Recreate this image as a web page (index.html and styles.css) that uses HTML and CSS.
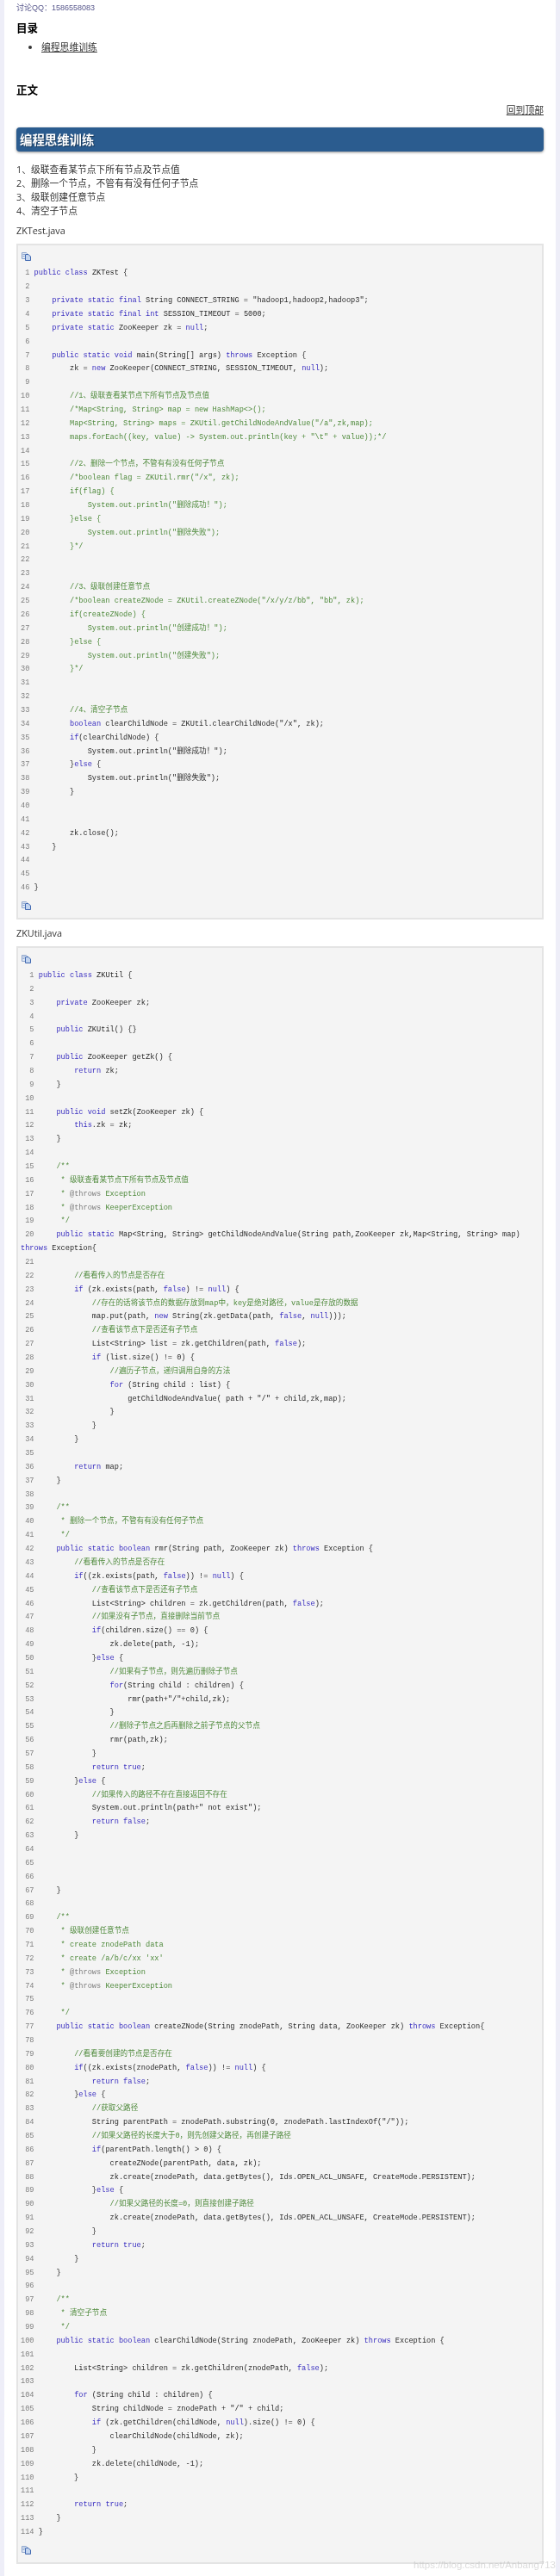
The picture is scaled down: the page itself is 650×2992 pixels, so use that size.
FILE: index.html
```html
<!DOCTYPE html>
<html lang="zh-CN">
<head>
<meta charset="utf-8">
<title>编程思维训练</title>
<link rel="stylesheet" href="styles.css">
</head>
<body>
<main class="page">
<p class="contact">讨论QQ：1586558083</p>
<h3 class="toc-title">目录</h3>
<ul class="toc">
<li><a href="#t">编程思维训练</a></li>
</ul>
<h3 class="body-title">正文</h3>
<p class="back"><a href="#top">回到顶部</a></p>
<h2 class="bar" id="t">编程思维训练</h2>
<p class="goals">1、级联查看某节点下所有节点及节点值<br>2、删除一个节点，不管有有没有任何子节点<br>3、级联创建任意节点<br>4、清空子节点</p>
<p class="file">ZKTest.java</p>
<div class="code">
<svg class="copy" viewBox="0 0 11 10"><path class="pg1" d="M.5.5h5l1 1v6h-6z"/><path class="pg2" d="M4.5 2.5h3.5l2.5 2.5v4.5h-6z"/><path class="pg3" d="M1.500 2.500h3M1.500 4.500h2"/></svg>
<pre class="src"><span class="n"> 1</span> <span class="k">public</span> <span class="k">class</span> ZKTest {
<span class="n"> 2</span> 
<span class="n"> 3</span>     <span class="k">private</span> <span class="k">static</span> <span class="k">final</span> String CONNECT_STRING = "hadoop1,hadoop2,hadoop3";
<span class="n"> 4</span>     <span class="k">private</span> <span class="k">static</span> <span class="k">final</span> <span class="k">int</span> SESSION_TIMEOUT = 5000;
<span class="n"> 5</span>     <span class="k">private</span> <span class="k">static</span> ZooKeeper zk = <span class="k">null</span>;
<span class="n"> 6</span> 
<span class="n"> 7</span>     <span class="k">public</span> <span class="k">static</span> <span class="k">void</span> main(String[] args) <span class="k">throws</span> Exception {
<span class="n"> 8</span>         zk = <span class="k">new</span> ZooKeeper(CONNECT_STRING, SESSION_TIMEOUT, <span class="k">null</span>);
<span class="n"> 9</span> 
<span class="n">10</span>         <span class="c">//1、级联查看某节点下所有节点及节点值</span>
<span class="n">11</span>         <span class="c">/*Map&lt;String, String&gt; map = new HashMap&lt;&gt;();</span>
<span class="n">12</span> <span class="c">        Map&lt;String, String&gt; maps = ZKUtil.getChildNodeAndValue("/a",zk,map);</span>
<span class="n">13</span> <span class="c">        maps.forEach((key, value) -&gt; System.out.println(key + "\t" + value));*/</span>
<span class="n">14</span> 
<span class="n">15</span>         <span class="c">//2、删除一个节点，不管有有没有任何子节点</span>
<span class="n">16</span>         <span class="c">/*boolean flag = ZKUtil.rmr("/x", zk);</span>
<span class="n">17</span> <span class="c">        if(flag) {</span>
<span class="n">18</span> <span class="c">            System.out.println("删除成功！");</span>
<span class="n">19</span> <span class="c">        }else {</span>
<span class="n">20</span> <span class="c">            System.out.println("删除失败");</span>
<span class="n">21</span> <span class="c">        }*/</span>
<span class="n">22</span> 
<span class="n">23</span> 
<span class="n">24</span>         <span class="c">//3、级联创建任意节点</span>
<span class="n">25</span>         <span class="c">/*boolean createZNode = ZKUtil.createZNode("/x/y/z/bb", "bb", zk);</span>
<span class="n">26</span> <span class="c">        if(createZNode) {</span>
<span class="n">27</span> <span class="c">            System.out.println("创建成功！");</span>
<span class="n">28</span> <span class="c">        }else {</span>
<span class="n">29</span> <span class="c">            System.out.println("创建失败");</span>
<span class="n">30</span> <span class="c">        }*/</span>
<span class="n">31</span> 
<span class="n">32</span> 
<span class="n">33</span>         <span class="c">//4、清空子节点</span>
<span class="n">34</span>         <span class="k">boolean</span> clearChildNode = ZKUtil.clearChildNode("/x", zk);
<span class="n">35</span>         <span class="k">if</span>(clearChildNode) {
<span class="n">36</span>             System.out.println("删除成功！");
<span class="n">37</span>         }<span class="k">else</span> {
<span class="n">38</span>             System.out.println("删除失败");
<span class="n">39</span>         }
<span class="n">40</span> 
<span class="n">41</span> 
<span class="n">42</span>         zk.close();
<span class="n">43</span>     }
<span class="n">44</span> 
<span class="n">45</span> 
<span class="n">46</span> }</pre>
<svg class="copy end" viewBox="0 0 11 10"><path class="pg1" d="M.5.5h5l1 1v6h-6z"/><path class="pg2" d="M4.5 2.5h3.5l2.5 2.5v4.5h-6z"/><path class="pg3" d="M1.500 2.500h3M1.500 4.500h2"/></svg>
</div>
<p class="file">ZKUtil.java</p>
<div class="code">
<svg class="copy" viewBox="0 0 11 10"><path class="pg1" d="M.5.5h5l1 1v6h-6z"/><path class="pg2" d="M4.5 2.5h3.5l2.5 2.5v4.5h-6z"/><path class="pg3" d="M1.500 2.500h3M1.500 4.500h2"/></svg>
<pre class="src"><span class="n">  1</span> <span class="k">public</span> <span class="k">class</span> ZKUtil {
<span class="n">  2</span> 
<span class="n">  3</span>     <span class="k">private</span> ZooKeeper zk;
<span class="n">  4</span> 
<span class="n">  5</span>     <span class="k">public</span> ZKUtil() {}
<span class="n">  6</span> 
<span class="n">  7</span>     <span class="k">public</span> ZooKeeper getZk() {
<span class="n">  8</span>         <span class="k">return</span> zk;
<span class="n">  9</span>     }
<span class="n"> 10</span> 
<span class="n"> 11</span>     <span class="k">public</span> <span class="k">void</span> setZk(ZooKeeper zk) {
<span class="n"> 12</span>         <span class="k">this</span>.zk = zk;
<span class="n"> 13</span>     }
<span class="n"> 14</span> 
<span class="n"> 15</span>     <span class="c">/**</span>
<span class="n"> 16</span> <span class="c">     * 级联查看某节点下所有节点及节点值</span>
<span class="n"> 17</span> <span class="c">     * <span class="t">@throws</span> Exception</span>
<span class="n"> 18</span> <span class="c">     * <span class="t">@throws</span> KeeperException</span>
<span class="n"> 19</span> <span class="c">     */</span>
<span class="n"> 20</span>     <span class="k">public</span> <span class="k">static</span> Map&lt;String, String&gt; getChildNodeAndValue(String path,ZooKeeper zk,Map&lt;String, String&gt; map) <span class="k">throws</span> Exception{
<span class="n"> 21</span> 
<span class="n"> 22</span>         <span class="c">//看看传入的节点是否存在</span>
<span class="n"> 23</span>         <span class="k">if</span> (zk.exists(path, <span class="k">false</span>) != <span class="k">null</span>) {
<span class="n"> 24</span>             <span class="c">//存在的话将该节点的数据存放到map中，key是绝对路径，value是存放的数据</span>
<span class="n"> 25</span>             map.put(path, <span class="k">new</span> String(zk.getData(path, <span class="k">false</span>, <span class="k">null</span>)));
<span class="n"> 26</span>             <span class="c">//查看该节点下是否还有子节点</span>
<span class="n"> 27</span>             List&lt;String&gt; list = zk.getChildren(path, <span class="k">false</span>);
<span class="n"> 28</span>             <span class="k">if</span> (list.size() != 0) {
<span class="n"> 29</span>                 <span class="c">//遍历子节点，递归调用自身的方法</span>
<span class="n"> 30</span>                 <span class="k">for</span> (String child : list) {
<span class="n"> 31</span>                     getChildNodeAndValue( path + "/" + child,zk,map);
<span class="n"> 32</span>                 }
<span class="n"> 33</span>             }
<span class="n"> 34</span>         }
<span class="n"> 35</span> 
<span class="n"> 36</span>         <span class="k">return</span> map;
<span class="n"> 37</span>     }
<span class="n"> 38</span> 
<span class="n"> 39</span>     <span class="c">/**</span>
<span class="n"> 40</span> <span class="c">     * 删除一个节点，不管有有没有任何子节点</span>
<span class="n"> 41</span> <span class="c">     */</span>
<span class="n"> 42</span>     <span class="k">public</span> <span class="k">static</span> <span class="k">boolean</span> rmr(String path, ZooKeeper zk) <span class="k">throws</span> Exception {
<span class="n"> 43</span>         <span class="c">//看看传入的节点是否存在</span>
<span class="n"> 44</span>         <span class="k">if</span>((zk.exists(path, <span class="k">false</span>)) != <span class="k">null</span>) {
<span class="n"> 45</span>             <span class="c">//查看该节点下是否还有子节点</span>
<span class="n"> 46</span>             List&lt;String&gt; children = zk.getChildren(path, <span class="k">false</span>);
<span class="n"> 47</span>             <span class="c">//如果没有子节点，直接删除当前节点</span>
<span class="n"> 48</span>             <span class="k">if</span>(children.size() == 0) {
<span class="n"> 49</span>                 zk.delete(path, -1);
<span class="n"> 50</span>             }<span class="k">else</span> {
<span class="n"> 51</span>                 <span class="c">//如果有子节点，则先遍历删除子节点</span>
<span class="n"> 52</span>                 <span class="k">for</span>(String child : children) {
<span class="n"> 53</span>                     rmr(path+"/"+child,zk);
<span class="n"> 54</span>                 }
<span class="n"> 55</span>                 <span class="c">//删除子节点之后再删除之前子节点的父节点</span>
<span class="n"> 56</span>                 rmr(path,zk);
<span class="n"> 57</span>             }
<span class="n"> 58</span>             <span class="k">return</span> <span class="k">true</span>;
<span class="n"> 59</span>         }<span class="k">else</span> {
<span class="n"> 60</span>             <span class="c">//如果传入的路径不存在直接返回不存在</span>
<span class="n"> 61</span>             System.out.println(path+" not exist");
<span class="n"> 62</span>             <span class="k">return</span> <span class="k">false</span>;
<span class="n"> 63</span>         }
<span class="n"> 64</span> 
<span class="n"> 65</span> 
<span class="n"> 66</span> 
<span class="n"> 67</span>     }
<span class="n"> 68</span> 
<span class="n"> 69</span>     <span class="c">/**</span>
<span class="n"> 70</span> <span class="c">     * 级联创建任意节点</span>
<span class="n"> 71</span> <span class="c">     * create znodePath data</span>
<span class="n"> 72</span> <span class="c">     * create /a/b/c/xx 'xx'</span>
<span class="n"> 73</span> <span class="c">     * <span class="t">@throws</span> Exception</span>
<span class="n"> 74</span> <span class="c">     * <span class="t">@throws</span> KeeperException</span>
<span class="n"> 75</span> 
<span class="n"> 76</span> <span class="c">     */</span>
<span class="n"> 77</span>     <span class="k">public</span> <span class="k">static</span> <span class="k">boolean</span> createZNode(String znodePath, String data, ZooKeeper zk) <span class="k">throws</span> Exception{
<span class="n"> 78</span> 
<span class="n"> 79</span>         <span class="c">//看看要创建的节点是否存在</span>
<span class="n"> 80</span>         <span class="k">if</span>((zk.exists(znodePath, <span class="k">false</span>)) != <span class="k">null</span>) {
<span class="n"> 81</span>             <span class="k">return</span> <span class="k">false</span>;
<span class="n"> 82</span>         }<span class="k">else</span> {
<span class="n"> 83</span>             <span class="c">//获取父路径</span>
<span class="n"> 84</span>             String parentPath = znodePath.substring(0, znodePath.lastIndexOf("/"));
<span class="n"> 85</span>             <span class="c">//如果父路径的长度大于0，则先创建父路径，再创建子路径</span>
<span class="n"> 86</span>             <span class="k">if</span>(parentPath.length() &gt; 0) {
<span class="n"> 87</span>                 createZNode(parentPath, data, zk);
<span class="n"> 88</span>                 zk.create(znodePath, data.getBytes(), Ids.OPEN_ACL_UNSAFE, CreateMode.PERSISTENT);
<span class="n"> 89</span>             }<span class="k">else</span> {
<span class="n"> 90</span>                 <span class="c">//如果父路径的长度=0，则直接创建子路径</span>
<span class="n"> 91</span>                 zk.create(znodePath, data.getBytes(), Ids.OPEN_ACL_UNSAFE, CreateMode.PERSISTENT);
<span class="n"> 92</span>             }
<span class="n"> 93</span>             <span class="k">return</span> <span class="k">true</span>;
<span class="n"> 94</span>         }
<span class="n"> 95</span>     }
<span class="n"> 96</span> 
<span class="n"> 97</span>     <span class="c">/**</span>
<span class="n"> 98</span> <span class="c">     * 清空子节点</span>
<span class="n"> 99</span> <span class="c">     */</span>
<span class="n">100</span>     <span class="k">public</span> <span class="k">static</span> <span class="k">boolean</span> clearChildNode(String znodePath, ZooKeeper zk) <span class="k">throws</span> Exception {
<span class="n">101</span> 
<span class="n">102</span>         List&lt;String&gt; children = zk.getChildren(znodePath, <span class="k">false</span>);
<span class="n">103</span> 
<span class="n">104</span>         <span class="k">for</span> (String child : children) {
<span class="n">105</span>             String childNode = znodePath + "/" + child;
<span class="n">106</span>             <span class="k">if</span> (zk.getChildren(childNode, <span class="k">null</span>).size() != 0) {
<span class="n">107</span>                 clearChildNode(childNode, zk);
<span class="n">108</span>             }
<span class="n">109</span>             zk.delete(childNode, -1);
<span class="n">110</span>         }
<span class="n">111</span> 
<span class="n">112</span>         <span class="k">return</span> <span class="k">true</span>;
<span class="n">113</span>     }
<span class="n">114</span> }</pre>
<svg class="copy end" viewBox="0 0 11 10"><path class="pg1" d="M.5.5h5l1 1v6h-6z"/><path class="pg2" d="M4.5 2.5h3.5l2.5 2.5v4.5h-6z"/><path class="pg3" d="M1.500 2.500h3M1.500 4.500h2"/></svg>
</div>
<div class="watermark">https://blog.csdn.net/Anbang713</div>
</main>
</body>
</html>
```
FILE: styles.css
```css
* { box-sizing: border-box; }
html, body { margin: 0; padding: 0; }
body {
  background: #eeeef8;
  color: #333;
  font-family: "Open Sans", "Noto Sans CJK SC", sans-serif;
  font-size: 10.8px;
  line-height: 15.857px;
}
.page {
  position: relative;
  width: 640px;
  height: 2992px;
  margin-left: 5px;
  padding: 0 14px;
  background: #fff;
  overflow: hidden;
  filter: blur(.3px);
}
.contact {
  margin: 0;
  height: 18px;
  font-family: "Liberation Sans", "Noto Sans CJK SC", sans-serif;
  font-size: 9px;
  line-height: 18px;
  color: #55558a;
}
.toc-title, .body-title {
  margin: 6px 0 0;
  font-size: 12.6px;
  line-height: 18px;
  font-weight: 700;
  color: #000;
}
.toc {
  margin: 5px 0 0;
  padding-left: 29px;
  line-height: 16px;
}
a { color: #333; text-decoration: underline; }
.body-title { margin-top: 33px; }
.back {
  margin: 6px 0 0;
  line-height: 16px;
  text-align: right;
}
.bar {
  height: 28px;
  margin: 12px 0 0;
  padding: 1px 0 0 4px;
  border-radius: 4px;
  background: #2b5c8f;
  box-shadow: 0 1px 3px rgba(0, 0, 0, .45);
  color: #fff;
  font-size: 14.4px;
  font-weight: 700;
  line-height: 28px;
  text-shadow: 1px 1px 1px rgba(0, 0, 0, .4);
}
.goals { margin: 13px 0 0; }
.file { margin: 8px 0 0; line-height: 16px; }
.code {
  margin-top: 7px;
  padding: 8px 4px 9px 3px;
  border: 2px solid #e4e4e4;
  background: #f4f4f4;
  line-height: 0;
}
.copy {
  display: block;
  width: 11px;
  height: 10px;
  margin-left: 1px;
}
.copy.end { margin-top: 7px; }
.pg1 { fill: #dfe8f5; stroke: #8fa6cc; stroke-width: 1; }
.pg2 { fill: #c4d6f0; stroke: #3f67b0; stroke-width: 1; }
.pg3 { fill: none; stroke: #8fa6cc; stroke-width: 1; }
.src {
  margin: 7px 0 0;
  font-family: "Liberation Mono", "Noto Sans CJK SC", monospace;
  font-size: 8.65px;
  line-height: 15.857px;
  white-space: pre-wrap;
  color: #2a2a2a;
}
.n { color: #808080; }
.k { color: #3a2fc0; }
.c { color: #4f8a3c; }
.t { color: #808080; }
.watermark {
  position: absolute;
  right: 0;
  top: 2971px;
  font-family: "Liberation Sans", sans-serif;
  font-size: 11.500px;
  line-height: 16px;
  color: rgba(190, 190, 190, .55);
}
```
